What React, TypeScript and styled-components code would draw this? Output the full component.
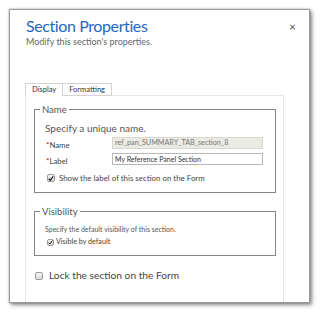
import React from 'react';
import styled, { createGlobalStyle } from 'styled-components';

const GlobalStyle = createGlobalStyle`
  html, body {
    margin: 0;
    padding: 0;
    background: #ffffff;
  }
  body {
    font-family: Lato, "Open Sans", Arial, sans-serif;
  }
`;

const Page = styled.div`
  width: 320px;
  height: 313px;
  padding: 9px 10px 10px 9px;
  box-sizing: border-box;
`;

const Dialog = styled.div`
  width: 301px;
  height: 294px;
  box-sizing: border-box;
  border: 1px solid #9a9a9a;
  background: #fff;
  box-shadow: 2px 2px 4px rgba(0, 0, 0, 0.45), 0 0 2px rgba(0, 0, 0, 0.3);
  display: flex;
  flex-direction: column;
  overflow: hidden;
`;

const Header = styled.div`
  display: flex;
  justify-content: space-between;
  align-items: flex-start;
  padding: 6px 13px 0 16px;
  height: 67px;
  box-sizing: border-box;
`;

const Title = styled.h1`
  margin: 0;
  font-size: 16px;
  font-weight: 400;
  line-height: 20px;
  letter-spacing: -0.4px;
  color: #2468c0;
`;

const Subtitle = styled.p`
  margin: 0;
  font-size: 9px;
  line-height: 12px;
  color: #666;
`;

const Close = styled.span`
  font-size: 12px;
  color: #555;
  margin-top: 5px;
  line-height: 12px;
`;

const Body = styled.div`
  flex: 1;
  display: flex;
  flex-direction: column;
  padding: 6px 25px 0 15px;
`;

const Tabs = styled.div`
  display: flex;
`;

const Tab = styled.div<{ $active?: boolean }>`
  font-size: 7.5px;
  line-height: 11px;
  color: #333;
  padding: 0 6px 0 6px;
  border: 1px solid #d4d4d4;
  border-bottom: ${(p) => (p.$active ? '1px solid #fff' : '1px solid #d4d4d4')};
  margin-left: -1px;
  background: #fff;
  position: relative;
  z-index: 1;
  margin-bottom: -1px;
  &:first-child {
    margin-left: 0;
  }
`;

const Panel = styled.div`
  flex: 1;
  border: 1px solid #e6e6e6;
  border-bottom: none;
  padding: 8px 7px 0 8px;
  display: flex;
  flex-direction: column;
`;

const Group = styled.fieldset<{ $height: number }>`
  margin: 0;
  padding: 0 10px 0 10px;
  border: 1px solid #858585;
  height: ${(p) => p.$height}px;
  box-sizing: border-box;
  min-width: 0;
`;

const Legend = styled.legend`
  font-size: 9.5px;
  line-height: 11px;
  color: #555;
  padding: 0 2px;
  margin-left: -5px;
`;

const Hint = styled.div<{ $small?: boolean }>`
  font-size: ${(p) => (p.$small ? '7px' : '10px')};
  line-height: ${(p) => (p.$small ? '10px' : '12px')};
  color: #555;
  margin-top: 7px;
`;

const FieldRow = styled.div<{ $top: number }>`
  display: flex;
  align-items: center;
  margin-top: ${(p) => p.$top}px;
  height: 12px;
`;

const FieldLabel = styled.label`
  width: 66px;
  font-size: 7.8px;
  color: #444;
  padding-left: 1px;
  padding-top: 3px;
`;

const Required = styled.span`
  color: #d00000;
  font-size: 8px;
`;

const TextBox = styled.div<{ $disabled?: boolean }>`
  width: 151px;
  height: 12px;
  box-sizing: border-box;
  border: 1px solid ${(p) => (p.$disabled ? '#d8d8d0' : '#b8b8b8')};
  background: ${(p) => (p.$disabled ? '#ebebe4' : '#fff')};
  font-size: ${(p) => (p.$disabled ? '7.2px' : '7px')};
  line-height: 10px;
  padding-left: 2px;
  color: ${(p) => (p.$disabled ? '#777' : '#333')};
  white-space: nowrap;
`;

const CheckRow = styled.div<{ $size: number; $gap: number; $top: number; $indent: number }>`
  display: flex;
  align-items: center;
  gap: ${(p) => p.$gap}px;
  margin-top: ${(p) => p.$top}px;
  padding-left: ${(p) => p.$indent}px;
  font-size: ${(p) => p.$size}px;
  line-height: ${(p) => p.$size + 3}px;
  color: #444;
`;

const Box = styled.span<{ $dim: number }>`
  width: ${(p) => p.$dim}px;
  height: ${(p) => p.$dim}px;
  box-sizing: border-box;
  border: 1px solid #9c9c9c;
  border-radius: 2px;
  background: linear-gradient(#f4f4f4, #dcdcdc);
  display: inline-flex;
  align-items: center;
  justify-content: center;
  flex: none;
`;

const Check = () => (
  <svg width="7" height="7" viewBox="0 0 8 8">
    <path d="M1 4.2 L3 6.4 L7 1" fill="none" stroke="#111" strokeWidth="1.6" />
  </svg>
);

const Spacer = styled.div<{ $h: number }>`
  height: ${(p) => p.$h}px;
  flex: none;
`;

export default function App() {
  return (
    <>
      <GlobalStyle />
      <Page>
        <Dialog>
          <Header>
            <div>
              <Title>Section Properties</Title>
              <Subtitle>Modify this section's properties.</Subtitle>
            </div>
            <Close>×</Close>
          </Header>
          <Body>
            <Tabs>
              <Tab $active>Display</Tab>
              <Tab>Formatting</Tab>
            </Tabs>
            <Panel>
              <Group $height={89}>
                <Legend>Name</Legend>
                <Hint>Specify a unique name.</Hint>
                <FieldRow $top={3}>
                  <FieldLabel><Required>*</Required>Name</FieldLabel>
                  <TextBox $disabled>ref_pan_SUMMARY_TAB_section_8</TextBox>
                </FieldRow>
                <FieldRow $top={4}>
                  <FieldLabel><Required>*</Required>Label</FieldLabel>
                  <TextBox>My Reference Panel Section</TextBox>
                </FieldRow>
                <CheckRow $size={7.9} $gap={4} $top={8} $indent={2}>
                  <Box $dim={8}><Check /></Box>
                  Show the label of this section on the Form
                </CheckRow>
              </Group>
              <Spacer $h={13} />
              <Group $height={50}>
                <Legend>Visibility</Legend>
                <Hint $small>Specify the default visibility of this section.</Hint>
                <CheckRow $size={7.2} $gap={2} $top={3} $indent={2}>
                  <Box $dim={7}><Check /></Box>
                  Visible by default
                </CheckRow>
              </Group>
              <CheckRow $size={10.2} $gap={6} $top={13} $indent={1}>
                <Box $dim={8} />
                Lock the section on the Form
              </CheckRow>
            </Panel>
          </Body>
        </Dialog>
      </Page>
    </>
  );
}
